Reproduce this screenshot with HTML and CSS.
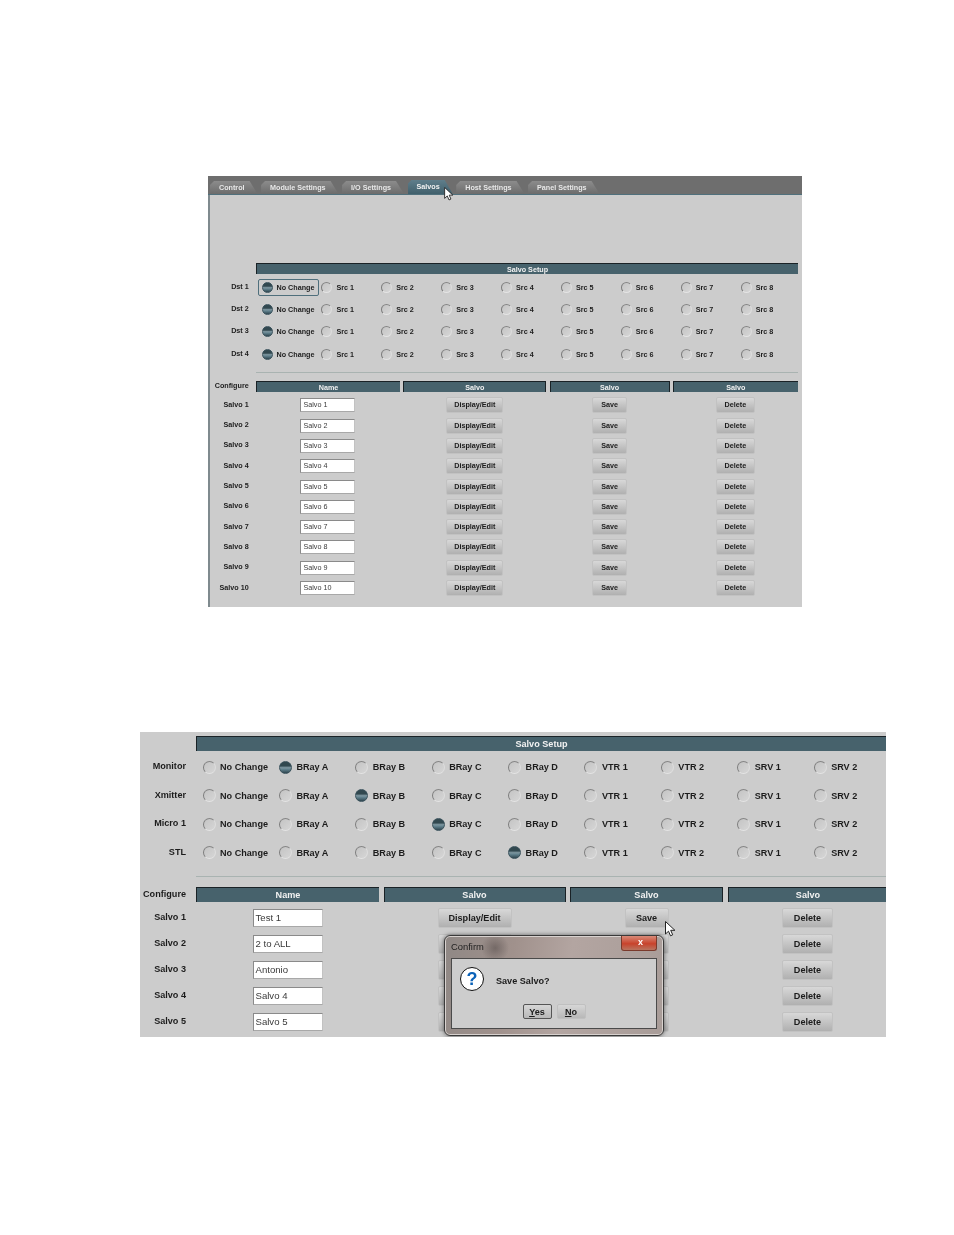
FILE: index.html
```html
<!DOCTYPE html>
<html lang="en">
<head>
<meta charset="utf-8">
<title>Salvo Setup</title>
<link rel="stylesheet" href="styles.css">
</head>
<body>
<section class="panel panel-small">
  <nav class="tabs">
    <span class="tab">Control</span>
    <span class="tab">Module Settings</span>
    <span class="tab">I/O Settings</span>
    <span class="tab tab-active">Salvos</span>
    <span class="tab">Host Settings</span>
    <span class="tab">Panel Settings</span>
  </nav>
  <div class="content">
    <h2 class="section-head">Salvo Setup</h2>
    <div class="radio-row"><span class="row-label">Dst 1</span><span class="choice focus"><i class="radio on"></i>No Change</span><span class="choice"><i class="radio"></i>Src 1</span><span class="choice"><i class="radio"></i>Src 2</span><span class="choice"><i class="radio"></i>Src 3</span><span class="choice"><i class="radio"></i>Src 4</span><span class="choice"><i class="radio"></i>Src 5</span><span class="choice"><i class="radio"></i>Src 6</span><span class="choice"><i class="radio"></i>Src 7</span><span class="choice"><i class="radio"></i>Src 8</span></div>
    <div class="radio-row"><span class="row-label">Dst 2</span><span class="choice"><i class="radio on"></i>No Change</span><span class="choice"><i class="radio"></i>Src 1</span><span class="choice"><i class="radio"></i>Src 2</span><span class="choice"><i class="radio"></i>Src 3</span><span class="choice"><i class="radio"></i>Src 4</span><span class="choice"><i class="radio"></i>Src 5</span><span class="choice"><i class="radio"></i>Src 6</span><span class="choice"><i class="radio"></i>Src 7</span><span class="choice"><i class="radio"></i>Src 8</span></div>
    <div class="radio-row"><span class="row-label">Dst 3</span><span class="choice"><i class="radio on"></i>No Change</span><span class="choice"><i class="radio"></i>Src 1</span><span class="choice"><i class="radio"></i>Src 2</span><span class="choice"><i class="radio"></i>Src 3</span><span class="choice"><i class="radio"></i>Src 4</span><span class="choice"><i class="radio"></i>Src 5</span><span class="choice"><i class="radio"></i>Src 6</span><span class="choice"><i class="radio"></i>Src 7</span><span class="choice"><i class="radio"></i>Src 8</span></div>
    <div class="radio-row"><span class="row-label">Dst 4</span><span class="choice"><i class="radio on"></i>No Change</span><span class="choice"><i class="radio"></i>Src 1</span><span class="choice"><i class="radio"></i>Src 2</span><span class="choice"><i class="radio"></i>Src 3</span><span class="choice"><i class="radio"></i>Src 4</span><span class="choice"><i class="radio"></i>Src 5</span><span class="choice"><i class="radio"></i>Src 6</span><span class="choice"><i class="radio"></i>Src 7</span><span class="choice"><i class="radio"></i>Src 8</span></div>
    <hr class="divider">
    <div class="table-head"><span class="row-label">Configure</span><span class="col-head">Name</span><span class="col-head">Salvo</span><span class="col-head">Salvo</span><span class="col-head">Salvo</span></div>
    <div class="table-row"><span class="row-label">Salvo 1</span><span class="field">Salvo 1</span><span class="btn btn-edit">Display/Edit</span><span class="btn btn-save">Save</span><span class="btn btn-del">Delete</span></div>
    <div class="table-row"><span class="row-label">Salvo 2</span><span class="field">Salvo 2</span><span class="btn btn-edit">Display/Edit</span><span class="btn btn-save">Save</span><span class="btn btn-del">Delete</span></div>
    <div class="table-row"><span class="row-label">Salvo 3</span><span class="field">Salvo 3</span><span class="btn btn-edit">Display/Edit</span><span class="btn btn-save">Save</span><span class="btn btn-del">Delete</span></div>
    <div class="table-row"><span class="row-label">Salvo 4</span><span class="field">Salvo 4</span><span class="btn btn-edit">Display/Edit</span><span class="btn btn-save">Save</span><span class="btn btn-del">Delete</span></div>
    <div class="table-row"><span class="row-label">Salvo 5</span><span class="field">Salvo 5</span><span class="btn btn-edit">Display/Edit</span><span class="btn btn-save">Save</span><span class="btn btn-del">Delete</span></div>
    <div class="table-row"><span class="row-label">Salvo 6</span><span class="field">Salvo 6</span><span class="btn btn-edit">Display/Edit</span><span class="btn btn-save">Save</span><span class="btn btn-del">Delete</span></div>
    <div class="table-row"><span class="row-label">Salvo 7</span><span class="field">Salvo 7</span><span class="btn btn-edit">Display/Edit</span><span class="btn btn-save">Save</span><span class="btn btn-del">Delete</span></div>
    <div class="table-row"><span class="row-label">Salvo 8</span><span class="field">Salvo 8</span><span class="btn btn-edit">Display/Edit</span><span class="btn btn-save">Save</span><span class="btn btn-del">Delete</span></div>
    <div class="table-row"><span class="row-label">Salvo 9</span><span class="field">Salvo 9</span><span class="btn btn-edit">Display/Edit</span><span class="btn btn-save">Save</span><span class="btn btn-del">Delete</span></div>
    <div class="table-row"><span class="row-label">Salvo 10</span><span class="field">Salvo 10</span><span class="btn btn-edit">Display/Edit</span><span class="btn btn-save">Save</span><span class="btn btn-del">Delete</span></div>
  </div>
  <svg class="cursor cursor-small" viewBox="0 0 11 16"><path d="M.5.5v12.5l3-2.8 2 4.6 2.2-1-2-4.5h4.2z" fill="#fff" stroke="#222" stroke-width="1"/></svg>
</section>

<section class="panel panel-large">
  <div class="content">
    <h2 class="section-head">Salvo Setup</h2>
    <div class="radio-row"><span class="row-label">Monitor</span><span class="choice"><i class="radio"></i>No Change</span><span class="choice"><i class="radio on"></i>BRay A</span><span class="choice"><i class="radio"></i>BRay B</span><span class="choice"><i class="radio"></i>BRay C</span><span class="choice"><i class="radio"></i>BRay D</span><span class="choice"><i class="radio"></i>VTR 1</span><span class="choice"><i class="radio"></i>VTR 2</span><span class="choice"><i class="radio"></i>SRV 1</span><span class="choice"><i class="radio"></i>SRV 2</span></div>
    <div class="radio-row"><span class="row-label">Xmitter</span><span class="choice"><i class="radio"></i>No Change</span><span class="choice"><i class="radio"></i>BRay A</span><span class="choice"><i class="radio on"></i>BRay B</span><span class="choice"><i class="radio"></i>BRay C</span><span class="choice"><i class="radio"></i>BRay D</span><span class="choice"><i class="radio"></i>VTR 1</span><span class="choice"><i class="radio"></i>VTR 2</span><span class="choice"><i class="radio"></i>SRV 1</span><span class="choice"><i class="radio"></i>SRV 2</span></div>
    <div class="radio-row"><span class="row-label">Micro 1</span><span class="choice"><i class="radio"></i>No Change</span><span class="choice"><i class="radio"></i>BRay A</span><span class="choice"><i class="radio"></i>BRay B</span><span class="choice"><i class="radio on"></i>BRay C</span><span class="choice"><i class="radio"></i>BRay D</span><span class="choice"><i class="radio"></i>VTR 1</span><span class="choice"><i class="radio"></i>VTR 2</span><span class="choice"><i class="radio"></i>SRV 1</span><span class="choice"><i class="radio"></i>SRV 2</span></div>
    <div class="radio-row"><span class="row-label">STL</span><span class="choice"><i class="radio"></i>No Change</span><span class="choice"><i class="radio"></i>BRay A</span><span class="choice"><i class="radio"></i>BRay B</span><span class="choice"><i class="radio"></i>BRay C</span><span class="choice"><i class="radio on"></i>BRay D</span><span class="choice"><i class="radio"></i>VTR 1</span><span class="choice"><i class="radio"></i>VTR 2</span><span class="choice"><i class="radio"></i>SRV 1</span><span class="choice"><i class="radio"></i>SRV 2</span></div>
    <hr class="divider">
    <div class="table-head"><span class="row-label">Configure</span><span class="col-head">Name</span><span class="col-head">Salvo</span><span class="col-head">Salvo</span><span class="col-head">Salvo</span></div>
    <div class="table-row"><span class="row-label">Salvo 1</span><span class="field">Test 1</span><span class="btn btn-edit">Display/Edit</span><span class="btn btn-save">Save</span><span class="btn btn-del">Delete</span></div>
    <div class="table-row"><span class="row-label">Salvo 2</span><span class="field">2 to ALL</span><span class="btn btn-edit"></span><span class="btn btn-save"></span><span class="btn btn-del">Delete</span></div>
    <div class="table-row"><span class="row-label">Salvo 3</span><span class="field">Antonio</span><span class="btn btn-edit"></span><span class="btn btn-save"></span><span class="btn btn-del">Delete</span></div>
    <div class="table-row"><span class="row-label">Salvo 4</span><span class="field">Salvo 4</span><span class="btn btn-edit"></span><span class="btn btn-save"></span><span class="btn btn-del">Delete</span></div>
    <div class="table-row"><span class="row-label">Salvo 5</span><span class="field">Salvo 5</span><span class="btn btn-edit"></span><span class="btn btn-save"></span><span class="btn btn-del">Delete</span></div>
  </div>
  <div class="dialog">
    <div class="dialog-title">Confirm</div>
    <span class="dialog-close">x</span>
    <div class="dialog-box">
      <div class="dialog-message"><span class="question">?</span><span class="dialog-text">Save Salvo?</span></div>
      <div class="dialog-actions"><span class="dialog-btn dialog-btn-default"><u>Y</u>es</span><span class="dialog-btn"><u>N</u>o</span></div>
    </div>
  </div>
  <svg class="cursor cursor-large" viewBox="0 0 11 16"><path d="M.5.5v12.5l3-2.8 2 4.6 2.2-1-2-4.5h4.2z" fill="#fff" stroke="#222" stroke-width="1"/></svg>
</section>
</body>
</html>
```
FILE: styles.css
```css
* { box-sizing: border-box; }

html, body { margin: 0; padding: 0; background: #fff; }

body {
  padding-top: 176px;
  height: 1235px;
  overflow: hidden;
  font-family: "Liberation Sans", Arial, sans-serif;
  color: #1c1c1c;
}

.panel {
  position: relative;
  background: #cccccc;
  overflow: hidden;
  filter: blur(.35px);
}

.panel-small {
  --fs: 7.2px;
  --label-col: 42.7px;
  --label-pad: 4px;
  --cols: 144px 143px 120px 125px;
  --col-gap: 3.3px;
  --head-h: 11px;
  --head-left: 46px;
  --head-right: 4px;
  --radio-col: 59.9px;
  --radio-size: 11px;
  --radio-pad: 5.5px;
  --radio-gap: 4px;
  --radio-row: 22.3px;
  --table-row: 20.3px;
  --field-w: 55px;
  --field-h: 14px;
  --btn-h: 16px;
  --edit-w: 57px;
  --save-w: 35px;
  --del-w: 39px;
  margin-left: 208px;
  width: 594px;
  height: 431px;
}

.panel-large {
  --fs: 9.1px;
  --label-col: 51.5px;
  --label-pad: 5.5px;
  --cols: 183px 182px 153px 160px;
  --col-gap: 4.5px;
  --head-h: 15px;
  --head-left: 56px;
  --head-right: 0px;
  --radio-col: 76.4px;
  --radio-size: 13px;
  --radio-pad: 6.5px;
  --radio-gap: 4.5px;
  --radio-row: 28.5px;
  --table-row: 26px;
  --field-w: 70px;
  --field-h: 18px;
  --btn-h: 20px;
  --edit-w: 74px;
  --save-w: 44px;
  --del-w: 51px;
  margin-left: 140px;
  margin-top: 125px;
  width: 746px;
  height: 305px;
}

/* tabs */
.tabs {
  display: flex;
  align-items: flex-end;
  gap: 3.5px;
  height: 19px;
  padding-left: 2px;
  background: #6e6e6e;
  border-bottom: 1px solid #50707c;
}

.tab {
  height: 13px;
  padding: 0 13px 0 9px;
  line-height: 13px;
  font-size: 7.2px;
  font-weight: 700;
  color: #e8e8e8;
  white-space: nowrap;
  background: linear-gradient(#8c8c8c, #6c6c6c);
  clip-path: polygon(0 100%, 0 4px, 4px 0, calc(100% - 8px) 0, 100% 100%);
}

.tab-active {
  height: 14px;
  line-height: 13px;
  background: linear-gradient(#5f7e8b, #41606c);
  color: #f2f2f2;
}

/* body */
.panel-small .content {
  height: 412px;
  padding-top: 68px;
  border-left: 2px solid #7f8a8e;
}

.panel-large .content { padding-top: 4px; }

.section-head {
  margin: 0 var(--head-right) 2px var(--head-left);
  height: var(--head-h);
  line-height: var(--head-h);
  text-align: center;
  font-size: var(--fs);
  font-weight: 700;
  color: #f2f2f2;
  background: #47626c;
  border-top: 1px solid #1a2226;
  border-left: 1px solid #1a2226;
}

.row-label {
  padding: 0 var(--label-pad) 2px 0;
  text-align: right;
  font-size: var(--fs);
  font-weight: 700;
  white-space: nowrap;
}

.radio-row {
  display: grid;
  grid-template-columns: var(--head-left) repeat(9, var(--radio-col));
  align-items: center;
  height: var(--radio-row);
}

.radio-row .row-label {
  margin-right: var(--col-gap);
}

.choice {
  position: relative;
  display: flex;
  align-items: center;
  gap: var(--radio-gap);
  padding-left: var(--radio-pad);
  font-size: var(--fs);
  font-weight: 700;
  white-space: nowrap;
}

.focus::after {
  content: "";
  position: absolute;
  left: 2px;
  top: -3px;
  bottom: -3px;
  width: 59px;
  border: 1px solid #4f6f7c;
  border-radius: 2px;
}

.radio {
  flex: none;
  display: block;
  width: var(--radio-size);
  height: var(--radio-size);
  border-radius: 50%;
  border: 1px solid;
  border-color: #858585 #dedede #e4e4e4 #7c7c7c;
  background: linear-gradient(135deg, #c4c4c4, #d6d6d6);
}

.radio.on {
  border-color: #3a525c;
  background: linear-gradient(#31484f 0, #31484f 35%, #7f98a2 52%, #5f7f8b 68%, #2f4650 100%);
}

.divider {
  height: 1px;
  margin: 7px var(--head-right) 8px var(--head-left);
  border: 0;
  background: #a9b3b1;
}

.panel-large .divider { margin-top: 9px; margin-bottom: 10px; }

.table-head,
.table-row {
  display: grid;
  grid-template-columns: var(--label-col) var(--cols);
  column-gap: var(--col-gap);
  align-items: center;
}

.table-head { height: var(--head-h); margin-bottom: 3px; }
.panel-large .table-head { margin-bottom: 2.5px; }
.table-row { height: var(--table-row); }

.col-head {
  height: var(--head-h);
  line-height: var(--head-h);
  text-align: center;
  font-size: var(--fs);
  font-weight: 700;
  color: #f2f2f2;
  background: #47626c;
  border-top: 1px solid #1a2226;
  border-left: 1px solid #1a2226;
}

.col-head + .col-head { border-right: 1px solid #1a2226; }
.col-head:last-child { border-right: 0; }

.field {
  justify-self: center;
  width: var(--field-w);
  height: var(--field-h);
  line-height: calc(var(--field-h) - 2px);
  padding-left: 2px;
  font-size: var(--fs);
  color: #3a3a3a;
  background: #fff;
  border: 1px solid;
  border-color: #8a8a8a #c2c2c2 #a8a8a8 #8a8a8a;
}

.panel-large .field { font-size: 9.6px; }

.btn {
  justify-self: center;
  height: var(--btn-h);
  line-height: calc(var(--btn-h) - 2px);
  text-align: center;
  font-size: var(--fs);
  font-weight: 700;
  white-space: nowrap;
  background: linear-gradient(#d8d8d8, #b0b0b0);
  border: 1px solid #c2c2c2;
  border-radius: 2px;
}

.btn-edit { width: var(--edit-w); }
.btn-save { width: var(--save-w); }
.btn-del { width: var(--del-w); }

/* cursors */
.cursor { position: absolute; }
.cursor-small { left: 236px; top: 11px; width: 10px; height: 14px; }
.cursor-large { left: 525px; top: 189px; width: 11px; height: 16px; }

/* dialog */
.dialog {
  position: absolute;
  left: 304px;
  top: 203px;
  width: 220px;
  height: 101px;
  display: flex;
  flex-direction: column;
  padding: 0 6px 6px;
  border: 1px solid #3a3a3a;
  border-radius: 6px;
  background:
    radial-gradient(circle at 23% 12px, rgba(90, 80, 78, .6) 0, rgba(90, 80, 78, 0) 14px),
    linear-gradient(100deg, #8f8885 0%, #a0918c 30%, #b3a5a1 55%, #a89c98 100%);
  box-shadow: 0 0 4px rgba(0, 0, 0, .55), inset 0 0 0 1px #d8d2cf;
}

.dialog-title {
  height: 22px;
  line-height: 21px;
  font-size: 9.4px;
  color: #1e1e1e;
}

.dialog-close {
  position: absolute;
  right: 6px;
  top: 0;
  width: 36px;
  height: 15px;
  line-height: 12px;
  padding-left: 3px;
  text-align: center;
  font-size: 9px;
  font-weight: 700;
  color: #fff;
  background: linear-gradient(#d98a78, #c8432c 55%, #b8745f);
  border: 1px solid #7a3a2c;
  border-top: 0;
  border-radius: 0 0 3px 3px;
}

.dialog-box {
  flex: 1;
  display: flex;
  flex-direction: column;
  background: #cdcdcd;
  border: 1px solid #4a4a4a;
}

.dialog-message {
  display: flex;
  align-items: center;
  gap: 12px;
  padding: 8px 0 0 8px;
  font-size: 9.1px;
  font-weight: 700;
}

.dialog-text { padding-top: 4px; }

.question {
  width: 24px;
  height: 24px;
  line-height: 22px;
  text-align: center;
  font-size: 18px;
  font-weight: 700;
  color: #0b62b8;
  background: #fff;
  border: 1px solid #111;
  border-radius: 50%;
}

.dialog-actions {
  display: flex;
  justify-content: center;
  gap: 5px;
  margin-top: 13px;
}

.dialog-btn {
  width: 29px;
  height: 15px;
  line-height: 14px;
  text-align: center;
  font-size: 9.1px;
  font-weight: 700;
  background: linear-gradient(#d6d6d6, #b8b8b8);
  border: 1px solid #c0c0c0;
  border-radius: 2px;
}

.dialog-btn-default { border-color: #555; }
```
